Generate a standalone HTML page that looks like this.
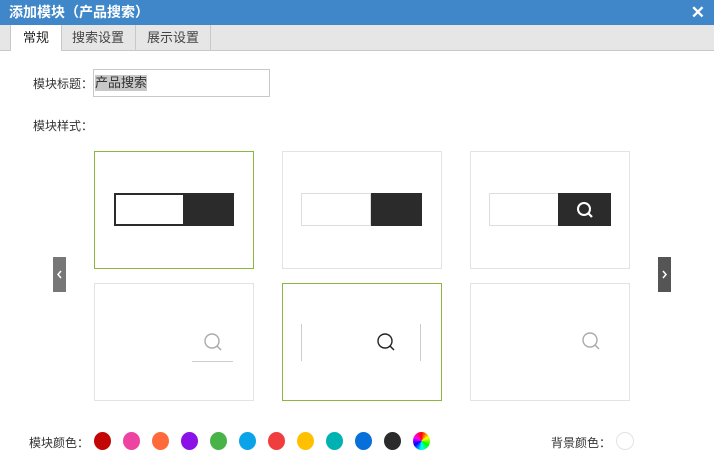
<!DOCTYPE html>
<html><head><meta charset="utf-8"><style>
body{margin:0;width:714px;height:467px;background:#fff;font-family:"Liberation Sans","Noto Sans CJK SC",sans-serif;font-size:12px;color:#333;position:relative;overflow:hidden}
.a{position:absolute}
.title{left:0;top:0;width:714px;height:25px;background:#3f87c8;color:#fff;font-weight:bold;font-size:14px;line-height:25px}
.tabs{left:0;top:25px;width:714px;height:25px;background:#e6e6e6;border-bottom:1px solid #c8c8c8}
.tab{top:0;height:25px;line-height:25px;text-align:center;border-right:1px solid #c8c8c8;color:#444;font-size:13px}
.box{width:158px;height:116px;border:1px solid #e3e3e3;background:#fff}
.sel{border-color:#8db63c}
.dot{width:17px;height:18px;border-radius:50%;top:432px}
</style></head><body>
<div class="a title"><span style="margin-left:9px">添加模块（产品搜索）</span><span style="position:absolute;right:9px;top:0;font-size:17px">✕</span></div>
<div class="a tabs">
<div class="a tab" style="left:10px;width:50px;background:#fff;height:26px;border-left:1px solid #c8c8c8;color:#222">常规</div>
<div class="a tab" style="left:61px;width:74px">搜索设置</div>
<div class="a tab" style="left:136px;width:74px">展示设置</div>
</div>
<div class="a" style="left:33px;top:75px">模块标题：</div>
<div class="a" style="left:93px;top:69px;width:175px;height:26px;border:1px solid #c8c8c8"><span style="position:absolute;left:1px;top:5px;background:#c8c8c8;font-size:13px;line-height:16px">产品搜索</span></div>
<div class="a" style="left:33px;top:117px">模块样式：</div>

<div class="a box sel" style="left:94px;top:151px"></div>
<div class="a" style="left:114px;top:193px;width:71px;height:33px;border:2px solid #2b2b2b;box-sizing:border-box"></div>
<div class="a" style="left:185px;top:193px;width:49px;height:33px;background:#2b2b2b"></div>

<div class="a box" style="left:282px;top:151px"></div>
<div class="a" style="left:301px;top:193px;width:70px;height:33px;border:1px solid #ddd;box-sizing:border-box"></div>
<div class="a" style="left:371px;top:193px;width:51px;height:33px;background:#2b2b2b"></div>

<div class="a box" style="left:470px;top:151px"></div>
<div class="a" style="left:489px;top:193px;width:70px;height:33px;border:1px solid #ddd;box-sizing:border-box"></div>
<div class="a" style="left:558px;top:193px;width:53px;height:33px;background:#2b2b2b"></div>
<svg class="a" style="left:575px;top:200px" width="20" height="20"><circle cx="9" cy="9" r="6" fill="none" stroke="#fff" stroke-width="2"/><path d="M13 13 L17 17" stroke="#fff" stroke-width="2.2"/></svg>

<div class="a box" style="left:94px;top:283px"></div>
<svg class="a" style="left:203px;top:332px" width="20" height="20"><circle cx="9" cy="9" r="7" fill="none" stroke="#aaa" stroke-width="1.4"/><path d="M14 14 L18 18" stroke="#aaa" stroke-width="1.5"/></svg>
<div class="a" style="left:192px;top:361px;width:41px;height:1px;background:#ccc"></div>

<div class="a box sel" style="left:282px;top:283px"></div>
<div class="a" style="left:301px;top:324px;width:1px;height:37px;background:#ccc"></div>
<div class="a" style="left:420px;top:324px;width:1px;height:37px;background:#ccc"></div>
<svg class="a" style="left:376px;top:332px" width="20" height="20"><circle cx="9" cy="9" r="7" fill="none" stroke="#222" stroke-width="1.4"/><path d="M14 14 L18 18" stroke="#222" stroke-width="1.5"/></svg>

<div class="a box" style="left:470px;top:283px"></div>
<svg class="a" style="left:581px;top:331px" width="20" height="20"><circle cx="9" cy="9" r="7" fill="none" stroke="#aaa" stroke-width="1.4"/><path d="M14 14 L18 18" stroke="#aaa" stroke-width="1.5"/></svg>

<div class="a" style="left:53px;top:257px;width:13px;height:35px;background:#777"><svg width="13" height="35"><path d="M8 14 L5 17.5 L8 21" fill="none" stroke="#fff" stroke-width="1.5"/></svg></div>
<div class="a" style="left:658px;top:257px;width:13px;height:35px;background:#555"><svg width="13" height="35"><path d="M5 14 L8 17.5 L5 21" fill="none" stroke="#fff" stroke-width="1.5"/></svg></div>

<div class="a" style="left:29px;top:434px">模块颜色：</div>
<div class="a dot" style="left:94px;background:#c30505"></div>
<div class="a dot" style="left:123px;background:#ec44a0"></div>
<div class="a dot" style="left:152px;background:#ff6a3a"></div>
<div class="a dot" style="left:181px;background:#8a12e6"></div>
<div class="a dot" style="left:210px;background:#48b447"></div>
<div class="a dot" style="left:239px;background:#0aa3e8"></div>
<div class="a dot" style="left:268px;background:#f03d3d"></div>
<div class="a dot" style="left:297px;background:#ffc000"></div>
<div class="a dot" style="left:326px;background:#00b2b2"></div>
<div class="a dot" style="left:355px;background:#066fd9"></div>
<div class="a dot" style="left:384px;background:#2b2b2b"></div>
<div class="a dot" style="left:413px;background:conic-gradient(red,yellow,lime,cyan,blue,magenta,red)"></div>
<div class="a" style="left:551px;top:434px">背景颜色：</div>
<div class="a dot" style="left:616px;top:432px;width:18px;height:18px;border:1px solid #e3e3e3;box-sizing:border-box"></div>
</body></html>
